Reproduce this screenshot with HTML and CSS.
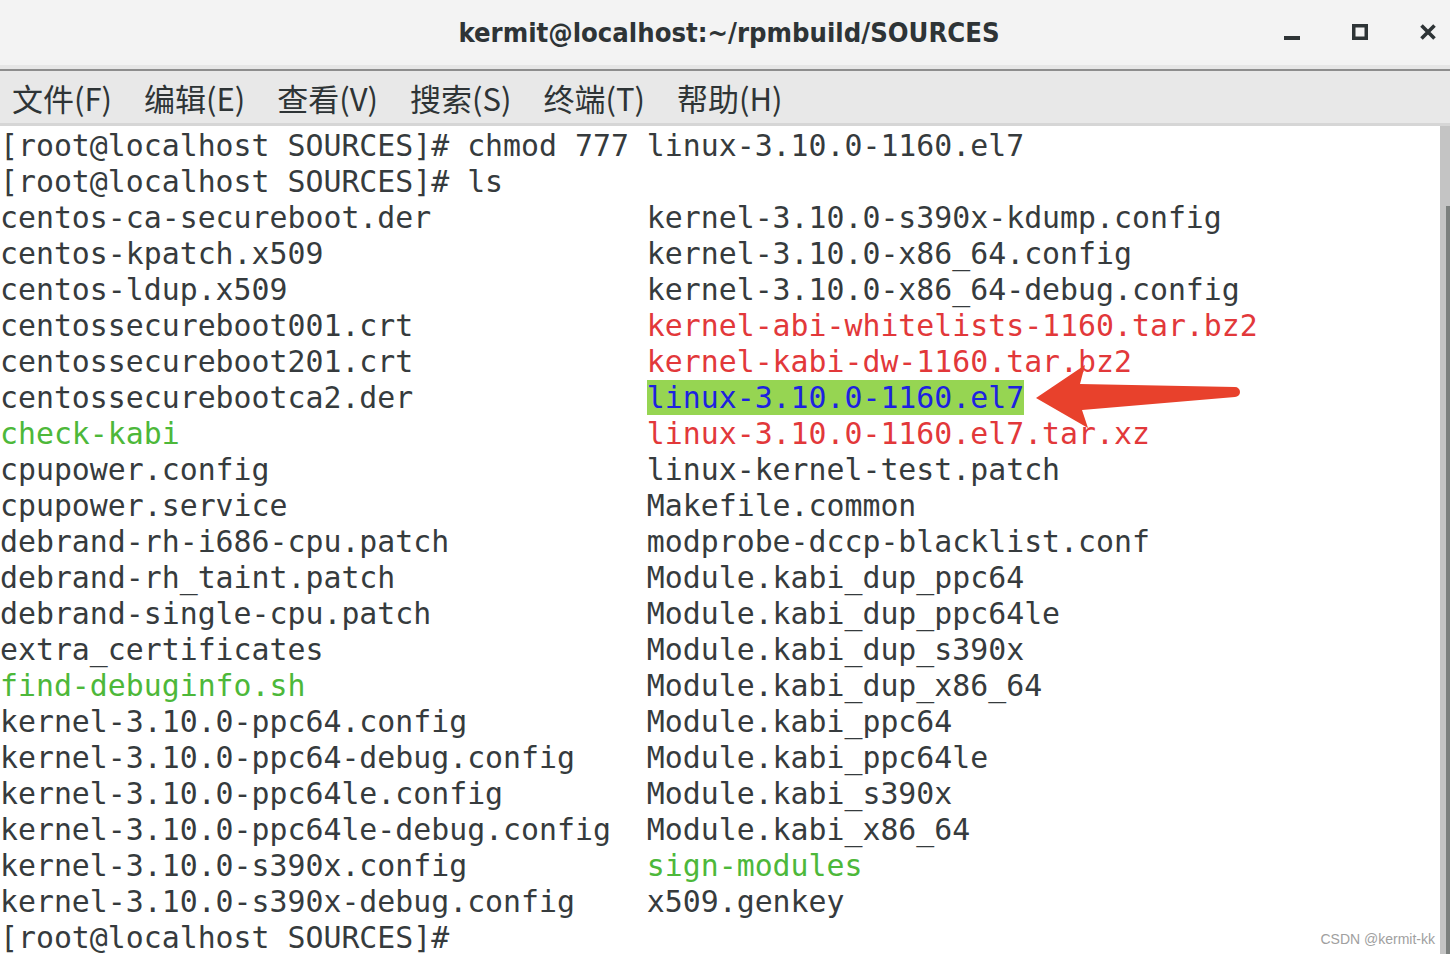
FILE: index.html
```html
<html>

<head>
  <meta charset="utf-8">
  <link rel="stylesheet" href="styles.css">
</head>

<body>
  <div class="window">
    <div class="titlebar">
      <div class="title">kermit@localhost:~/rpmbuild/SOURCES</div>
      <div class="controls">
        <svg width="16" height="16" viewBox="0 0 16 16"><rect x="0" y="12" width="16" height="4" fill="#2e3436"/></svg>
        <svg width="16" height="16" viewBox="0 0 16 16"><rect x="1.75" y="1.75" width="12.5" height="12.5" fill="none" stroke="#2e3436" stroke-width="3.5"/></svg>
        <svg width="16" height="16" viewBox="0 0 16 16"><path d="M1.5 1.5 L14.5 14.5 M14.5 1.5 L1.5 14.5" stroke="#2e3436" stroke-width="3.6"/></svg>
      </div>
    </div>
    <div class="menubar">
      <span class="menu">文件(F)</span>
      <span class="menu">编辑(E)</span>
      <span class="menu">查看(V)</span>
      <span class="menu">搜索(S)</span>
      <span class="menu">终端(T)</span>
      <span class="menu">帮助(H)</span>
    </div>
    <div class="terminal">
      <div class="screen">
        <div class="line">[root@localhost SOURCES]# chmod 777 linux-3.10.0-1160.el7</div>
        <div class="line">[root@localhost SOURCES]# ls</div>
        <div class="listing">
          <div>centos-ca-secureboot.der</div><div>kernel-3.10.0-s390x-kdump.config</div>
          <div>centos-kpatch.x509</div><div>kernel-3.10.0-x86_64.config</div>
          <div>centos-ldup.x509</div><div>kernel-3.10.0-x86_64-debug.config</div>
          <div>centossecureboot001.crt</div><div class="red">kernel-abi-whitelists-1160.tar.bz2</div>
          <div>centossecureboot201.crt</div><div class="red">kernel-kabi-dw-1160.tar.bz2</div>
          <div>centossecurebootca2.der</div><div><span class="dir">linux-3.10.0-1160.el7</span></div>
          <div class="green">check-kabi</div><div class="red">linux-3.10.0-1160.el7.tar.xz</div>
          <div>cpupower.config</div><div>linux-kernel-test.patch</div>
          <div>cpupower.service</div><div>Makefile.common</div>
          <div>debrand-rh-i686-cpu.patch</div><div>modprobe-dccp-blacklist.conf</div>
          <div>debrand-rh_taint.patch</div><div>Module.kabi_dup_ppc64</div>
          <div>debrand-single-cpu.patch</div><div>Module.kabi_dup_ppc64le</div>
          <div>extra_certificates</div><div>Module.kabi_dup_s390x</div>
          <div class="green">find-debuginfo.sh</div><div>Module.kabi_dup_x86_64</div>
          <div>kernel-3.10.0-ppc64.config</div><div>Module.kabi_ppc64</div>
          <div>kernel-3.10.0-ppc64-debug.config</div><div>Module.kabi_ppc64le</div>
          <div>kernel-3.10.0-ppc64le.config</div><div>Module.kabi_s390x</div>
          <div>kernel-3.10.0-ppc64le-debug.config</div><div>Module.kabi_x86_64</div>
          <div>kernel-3.10.0-s390x.config</div><div class="green">sign-modules</div>
          <div>kernel-3.10.0-s390x-debug.config</div><div>x509.genkey</div>
        </div>
        <div class="line">[root@localhost SOURCES]# </div>
      </div>
      <div class="scrollbar">
        <div class="slider"></div>
      </div>
      <svg class="arrow" width="220" height="70" viewBox="1030 362 220 70">
        <path d="M1036 398 L1085 365 L1080 384 L1235 387 A5 5 0 0 1 1235 397 L1082 410 L1088 428 Z" fill="#e8412c"/>
      </svg>
      <div class="watermark">CSDN @kermit-kk</div>
    </div>
  </div>
</body>

</html>
```

FILE: styles.css
```css
body {
  margin: 0;
  width: 1450px;
  height: 954px;
  overflow: hidden;
  background: #ffffff;
}

.window {
  display: flex;
  flex-direction: column;
  height: 954px;
}

.titlebar {
  flex-shrink: 0;
  height: 65px;
  background: #f3f3f3;
  border-bottom: 4px solid #e6e6e6;
  box-shadow: 0 2px 0 #8d8d8d;
  position: relative;
  display: flex;
  align-items: center;
  justify-content: center;
}

.title {
  font-family: "DejaVu Sans", sans-serif;
  font-stretch: condensed;
  font-weight: bold;
  font-size: 27.2px;
  color: #2e3436;
  padding-left: 8px;
}

.controls {
  position: absolute;
  right: 14px;
  top: 24px;
  display: flex;
  gap: 52px;
}

.menubar {
  flex-shrink: 0;
  margin-top: 2px;
  height: 52px;
  background: #e8e8e8;
  border-bottom: 3px solid #d6d6d6;
  display: flex;
  align-items: center;
  gap: 32px;
  padding-left: 12px;
  font-family: "Noto Sans CJK SC", "Noto Sans", sans-serif;
  font-size: 31px;
  color: #2e3436;
}

.terminal {
  flex: 1;
  min-height: 0;
  display: flex;
  position: relative;
  background: #ffffff;
}

.screen {
  flex: 1;
  padding-top: 2px;
  font-family: "DejaVu Sans Mono", monospace;
  font-size: 29.85px;
  line-height: 36px;
  color: #363b3d;
}

.line,
.listing > div {
  white-space: pre;
  height: 36px;
}

.listing {
  display: grid;
  grid-template-columns: 36ch 1fr;
}

.red {
  color: #e2383a;
}

.green {
  color: #4db83a;
}

.dir {
  color: #1d22e0;
  background: #96d552;
}

.scrollbar {
  width: 10px;
  background: #c4c4c4;
  display: flex;
  justify-content: flex-end;
  padding-top: 80px;
}

.slider {
  width: 4px;
  background: #7c807e;
}

.arrow {
  position: absolute;
  left: 1030px;
  top: 236px;
}

.watermark {
  position: absolute;
  right: 15px;
  bottom: 7px;
  font-family: "Liberation Sans", sans-serif;
  font-size: 14px;
  color: #a0a0a0;
}
```
